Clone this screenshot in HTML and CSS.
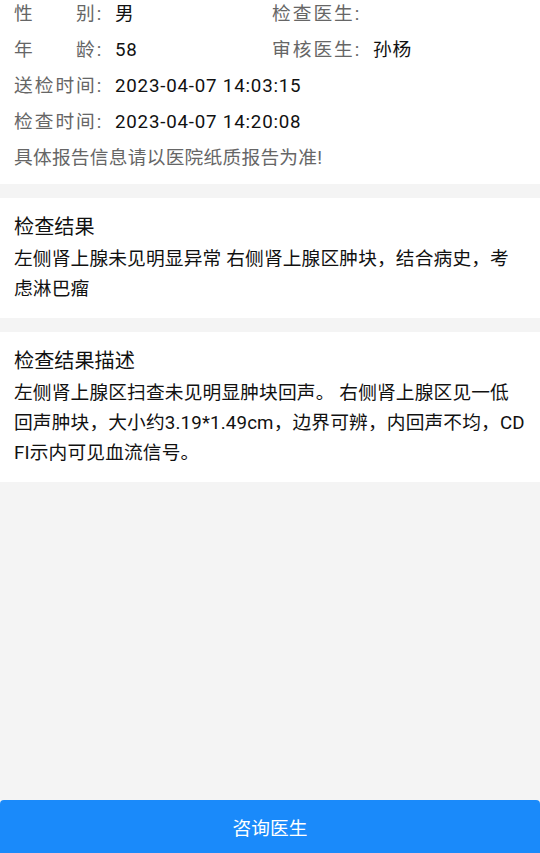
FILE: index.html
```html
<!DOCTYPE html>
<html lang="zh-CN">
<head>
    <meta charset="UTF-8">
    <meta name="viewport" content="width=device-width, initial-scale=1.0">
    <title>检查报告</title>
    <link rel="stylesheet" href="styles.css">
</head>
<body>
    <div class="page">
        <div class="section info">
            <div class="row two">
                <div class="item"><span class="label">性　　别:</span><span class="value">男</span></div>
                <div class="item"><span class="label">检查医生:</span><span class="value"></span></div>
            </div>
            <div class="row two">
                <div class="item"><span class="label">年　　龄:</span><span class="value">58</span></div>
                <div class="item"><span class="label">审核医生:</span><span class="value">孙杨</span></div>
            </div>
            <div class="row">
                <div class="item"><span class="label">送检时间:</span><span class="value">2023-04-07 14:03:15</span></div>
            </div>
            <div class="row">
                <div class="item"><span class="label">检查时间:</span><span class="value">2023-04-07 14:20:08</span></div>
            </div>
            <div class="row note">具体报告信息请以医院纸质报告为准!</div>
        </div>

        <div class="section block">
            <div class="block-title">检查结果</div>
            <div class="block-text">左侧肾上腺未见明显异常 右侧肾上腺区肿块，结合病史，考虑淋巴瘤</div>
        </div>

        <div class="section block">
            <div class="block-title">检查结果描述</div>
            <div class="block-text">左侧肾上腺区扫查未见明显肿块回声。 右侧肾上腺区见一低回声肿块，大小约3.19*1.49cm，边界可辨，内回声不均，CDFI示内可见血流信号。</div>
        </div>

        <div class="spacer"></div>

        <button class="consult">咨询医生</button>
    </div>
</body>
</html>
```

FILE: styles.css
```css
body {
    margin: 0;
    font-family: Roboto, "Noto Sans CJK SC", sans-serif;
    background-color: #f4f4f4;
    color: #111;
}
.page {
    display: flex;
    flex-direction: column;
    min-height: 100vh;
}
.section {
    background-color: #fff;
    padding: 0 14px;
}
.section + .section {
    margin-top: 14px;
}
.info {
    padding-bottom: 12px;
}
.row {
    display: flex;
    line-height: 28px;
    font-size: 18.72px;
    margin-bottom: 8px;
}
.row:last-child {
    margin-bottom: 0;
}
.row.two {
    display: grid;
    grid-template-columns: 258px 1fr;
}
.item {
    display: flex;
    white-space: nowrap;
}
.label {
    width: 101px;
    flex-shrink: 0;
    color: #666;
    letter-spacing: 2px;
}
.value {
    color: #111;
    letter-spacing: 0.8px;
}
.note {
    color: #666;
    letter-spacing: 0.25px;
}
.block {
    padding-top: 14px;
    padding-bottom: 14px;
}
.block-title {
    font-size: 20.16px;
    line-height: 30px;
    margin-bottom: 2px;
}
.block-text {
    font-size: 18.72px;
    line-height: 30px;
    letter-spacing: 0.15px;
    word-break: break-all;
}
.spacer {
    flex: 1;
}
.consult {
    display: block;
    width: 100%;
    height: 53px;
    border: none;
    border-radius: 4px 4px 0 0;
    background-color: #1a8afa;
    color: #fff;
    font-family: Roboto, "Noto Sans CJK SC", sans-serif;
    font-size: 18.72px;
}
```
